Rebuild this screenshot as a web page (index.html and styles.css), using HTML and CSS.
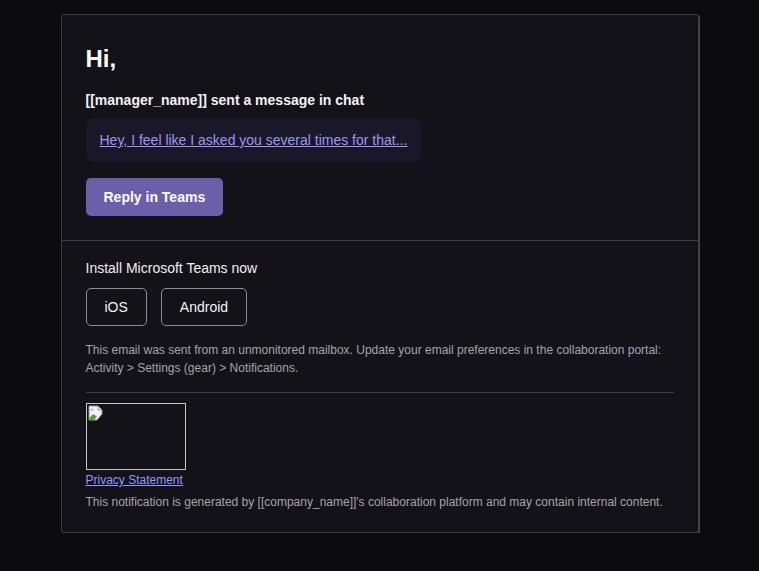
FILE: index.html
```html
<!DOCTYPE html>
<html>
<head>
<meta charset="utf-8">
<link rel="stylesheet" href="styles.css">
</head>
<body>
<div class="card">
  <div class="top">
    <h1 class="hi">Hi,</h1>
    <p class="sender">[[manager_name]] sent a message in chat</p>
    <div class="msg"><a href="#" class="msg-link">Hey, I feel like I asked you several times for that...</a></div>
    <a href="#" class="reply">Reply in Teams</a>
  </div>
  <div class="bottom">
    <p class="install">Install Microsoft Teams now</p>
    <div class="stores">
      <a href="#" class="store">iOS</a>
      <a href="#" class="store">Android</a>
    </div>
    <p class="note">This email was sent from an unmonitored mailbox. Update your email preferences in the collaboration portal: Activity &gt; Settings (gear) &gt; Notifications.</p>
    <hr class="rule">
    <div class="logo">
      <svg class="broken" width="16" height="16" viewBox="0 0 16 16">
        <path d="M1 1h9l4 4v4l-5 6H1z" fill="#f2f2f2" stroke="#9a9a9a" stroke-width="1"/>
        <path d="M10 1v4h4" fill="#dcdcdc" stroke="#9a9a9a" stroke-width="1"/>
        <path d="M1.5 13 L5 9 L9 11.5 L6 15 H1.5z" fill="#5aa02c"/>
        <path d="M2 5.5 a2 2 0 0 1 4 0" fill="#9cc3e6"/>
      </svg>
    </div>
    <a href="#" class="privacy">Privacy Statement</a>
    <p class="footer">This notification is generated by [[company_name]]'s collaboration platform and may contain internal content.</p>
  </div>
</div>
</body>
</html>
```
FILE: styles.css
```css
html, body {
  margin: 0;
  padding: 0;
  background: #0c0b10;
}
body {
  padding: 14px 0 0;
  font-family: "Liberation Sans", Arial, sans-serif;
  color: #ffffff;
}
.card {
  width: 636px;
  margin: 0 auto;
  background: #131218;
  border: 1px solid #3a3a40;
  border-radius: 3px;
  box-shadow: 1px 1px 0 #4a4a50;
}
.top {
  padding: 30px 24px 24px;
  border-bottom: 1px solid #3c3c42;
}
.hi {
  margin: 0;
  font-size: 24px;
  line-height: 28px;
  font-weight: 700;
  color: #ffffff;
}
.sender {
  margin: 18px 0 0;
  font-size: 14px;
  line-height: 18px;
  font-weight: 700;
  color: #f2f2f2;
}
.msg {
  display: inline-block;
  margin-top: 9px;
  padding: 13px 14px 13px;
  background: #1a1729;
  border-radius: 7px;
  font-size: 14px;
  line-height: 18px;
}
.msg-link {
  color: #9c98f2;
  text-decoration: underline;
}
.reply {
  display: table;
  margin-top: 16px;
  padding: 0 18px;
  height: 38px;
  line-height: 38px;
  background: #6a5fa8;
  border-radius: 5px;
  color: #ffffff;
  font-size: 14px;
  font-weight: 700;
  text-decoration: none;
}
.bottom {
  padding: 18px 24px 21px;
}
.install {
  margin: 0;
  font-size: 14px;
  line-height: 18px;
  color: #f0f0f0;
}
.stores {
  display: flex;
  gap: 14px;
  margin-top: 11px;
}
.store {
  display: block;
  height: 36px;
  line-height: 36px;
  padding: 0 18px;
  border: 1px solid #8e8e94;
  border-radius: 5px;
  color: #f2f2f2;
  font-size: 14px;
  text-decoration: none;
}
.note {
  margin: 15px 0 0;
  font-size: 12px;
  line-height: 18px;
  color: #a4a4ac;
}
.rule {
  margin: 15px 0 0;
  border: 0;
  border-top: 1px solid #3c3c42;
  height: 0;
}
.logo {
  width: 98px;
  height: 65px;
  margin-top: 10px;
  border: 1px solid #c8c8c8;
  position: relative;
}
.broken {
  position: absolute;
  left: 1px;
  top: 1px;
}
.privacy {
  display: inline-block;
  margin-top: 2px;
  font-size: 12px;
  line-height: 16px;
  color: #8f9bff;
  text-decoration: underline;
}
.footer {
  margin: 5px 0 0;
  font-size: 12px;
  line-height: 18px;
  color: #a4a4ac;
}
```
